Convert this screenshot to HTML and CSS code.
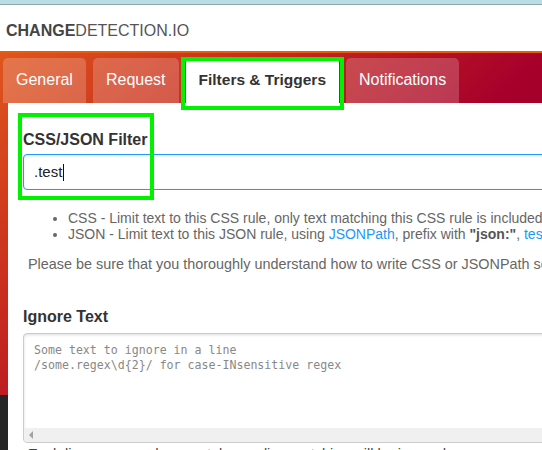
FILE: index.html
```html
<!DOCTYPE html>
<html lang="en">
<head>
<meta charset="utf-8">
<title>changedetection.io - Edit</title>
<link rel="stylesheet" href="styles.css">
</head>
<body>
<div class="topbar"></div>
<header class="header">
  <span class="logo"><b>CHANGE</b>DETECTION.IO</span>
</header>
<div class="hero">
  <nav class="tabs">
    <a class="tab">General</a>
    <a class="tab">Request</a>
    <a class="tab active">Filters &amp; Triggers</a>
    <a class="tab">Notifications</a>
  </nav>
  <div class="annot annot-tab"></div>
  <main class="panel">
    <div class="annot annot-field"></div>
    <label class="label">CSS/JSON Filter</label>
    <div class="input">.test<span class="caret"></span></div>
    <ul class="hints">
      <li>CSS - Limit text to this CSS rule, only text matching this CSS rule is included.</li>
      <li>JSON - Limit text to this JSON rule, using <a class="link">JSONPath</a>, prefix with <b>"json:"</b>, <a class="link">test your JSONPath here</a></li>
    </ul>
    <p class="note">Please be sure that you thoroughly understand how to write CSS or JSONPath selector rules before filing an issue on GitHub!</p>
    <label class="label label-ignore">Ignore Text</label>
    <div class="textarea">
      <pre class="textarea-text">Some text to ignore in a line
/some.regex\d{2}/ for case-INsensitive regex</pre>
      <div class="hscroll"><span class="arrow-left"></span></div>
    </div>
    <p class="help">Each line processed separately, any line matching will be ignored.</p>
  </main>
</div>
</body>
</html>
```
FILE: styles.css
```css
html, body {
  margin: 0;
  padding: 0;
  overflow: hidden;
}
body {
  background: #262626;
  font-family: "Liberation Sans", Arial, sans-serif;
  color: #333;
  width: 542px;
  height: 450px;
}
.topbar {
  height: 4px;
  background: #b6dee3;
  border-bottom: 1px solid #8fa6a9;
}
.header {
  height: 46px;
  background: #fff;
  padding-left: 6px;
  box-sizing: border-box;
  padding-top: 17px;
}
.logo {
  font-size: 16px;
  color: #555;
  line-height: 18px;
}
.logo b {
  color: #444;
}
.hero {
  position: relative;
  height: 344px;
  box-sizing: border-box;
  border-top: 2px solid #ea5b0c;
  background: linear-gradient(135deg, #df561d 0%, #c62a1f 30%, #a6002b 62%, #8e0024 100%);
}
.tabs {
  display: flex;
  gap: 7px;
  padding: 5px 0 0 3px;
  height: 50px;
  box-sizing: border-box;
}
.tab {
  display: block;
  height: 45px;
  box-sizing: border-box;
  padding: 13px 13px 0;
  font-size: 16px;
  line-height: 18px;
  color: #fff;
  background: rgba(255, 255, 255, 0.2);
  border-radius: 5px 5px 0 0;
  white-space: nowrap;
}
.tab.active {
  background: #fff;
  color: #333;
  font-weight: bold;
  font-size: 15.5px;
}
.annot {
  position: absolute;
  border: 4px solid #00f200;
  box-sizing: border-box;
  pointer-events: none;
  z-index: 2;
}
.annot-tab {
  left: 181px;
  top: 4px;
  width: 163px;
  height: 53px;
}
.annot-field {
  left: 10px;
  top: 10px;
  width: 136px;
  height: 87px;
}
.panel {
  position: relative;
  margin-left: 8px;
  width: 700px;
  height: 400px;
  background: #fff;
  padding: 28px 15px 0;
  box-sizing: border-box;
}
.label {
  display: block;
  font-size: 16px;
  font-weight: bold;
  line-height: 18px;
  color: #333;
}
.input {
  margin-top: 5px;
  height: 36px;
  box-sizing: border-box;
  border: 1px solid #1f9cf5;
  border-radius: 4px;
  box-shadow: inset 0 1px 3px #e4e4e4;
  padding-left: 10px;
  font-size: 15px;
  line-height: 34px;
  color: #222;
}
.caret {
  display: inline-block;
  width: 1px;
  height: 17px;
  background: #111;
  vertical-align: -4px;
  margin-left: 1px;
}
.hints {
  margin: 20px 0 0;
  padding-left: 45px;
  font-size: 14px;
  line-height: 16px;
  color: #666;
  white-space: nowrap;
}
.link {
  color: #1b98f8;
}
.hints b {
  color: #555;
}
.note {
  margin: 13px 0 0;
  padding-left: 5px;
  font-size: 14.4px;
  line-height: 18px;
  color: #666;
  white-space: nowrap;
}
.label-ignore {
  margin-top: 35px;
}
.textarea {
  margin-top: 7px;
  height: 110px;
  box-sizing: border-box;
  border: 1px solid #ccc;
  border-radius: 4px;
  box-shadow: inset 0 1px 3px #ddd;
  display: flex;
  flex-direction: column;
  overflow: hidden;
}
.textarea-text {
  flex: 1;
  margin: 0;
  padding: 9px 10px 0;
  font-family: "DejaVu Sans Mono", monospace;
  font-size: 11.6px;
  line-height: 15px;
  color: #888;
}
.hscroll {
  height: 14px;
  background: #f0f0f0;
  display: flex;
  align-items: center;
  padding-left: 5px;
}
.arrow-left {
  width: 0;
  height: 0;
  border-top: 4px solid transparent;
  border-bottom: 4px solid transparent;
  border-right: 4px solid #a3a3a3;
}
.help {
  margin: 2px 0 0;
  padding-left: 5px;
  font-size: 14.5px;
  line-height: 18px;
  color: #444;
  white-space: nowrap;
}
```
